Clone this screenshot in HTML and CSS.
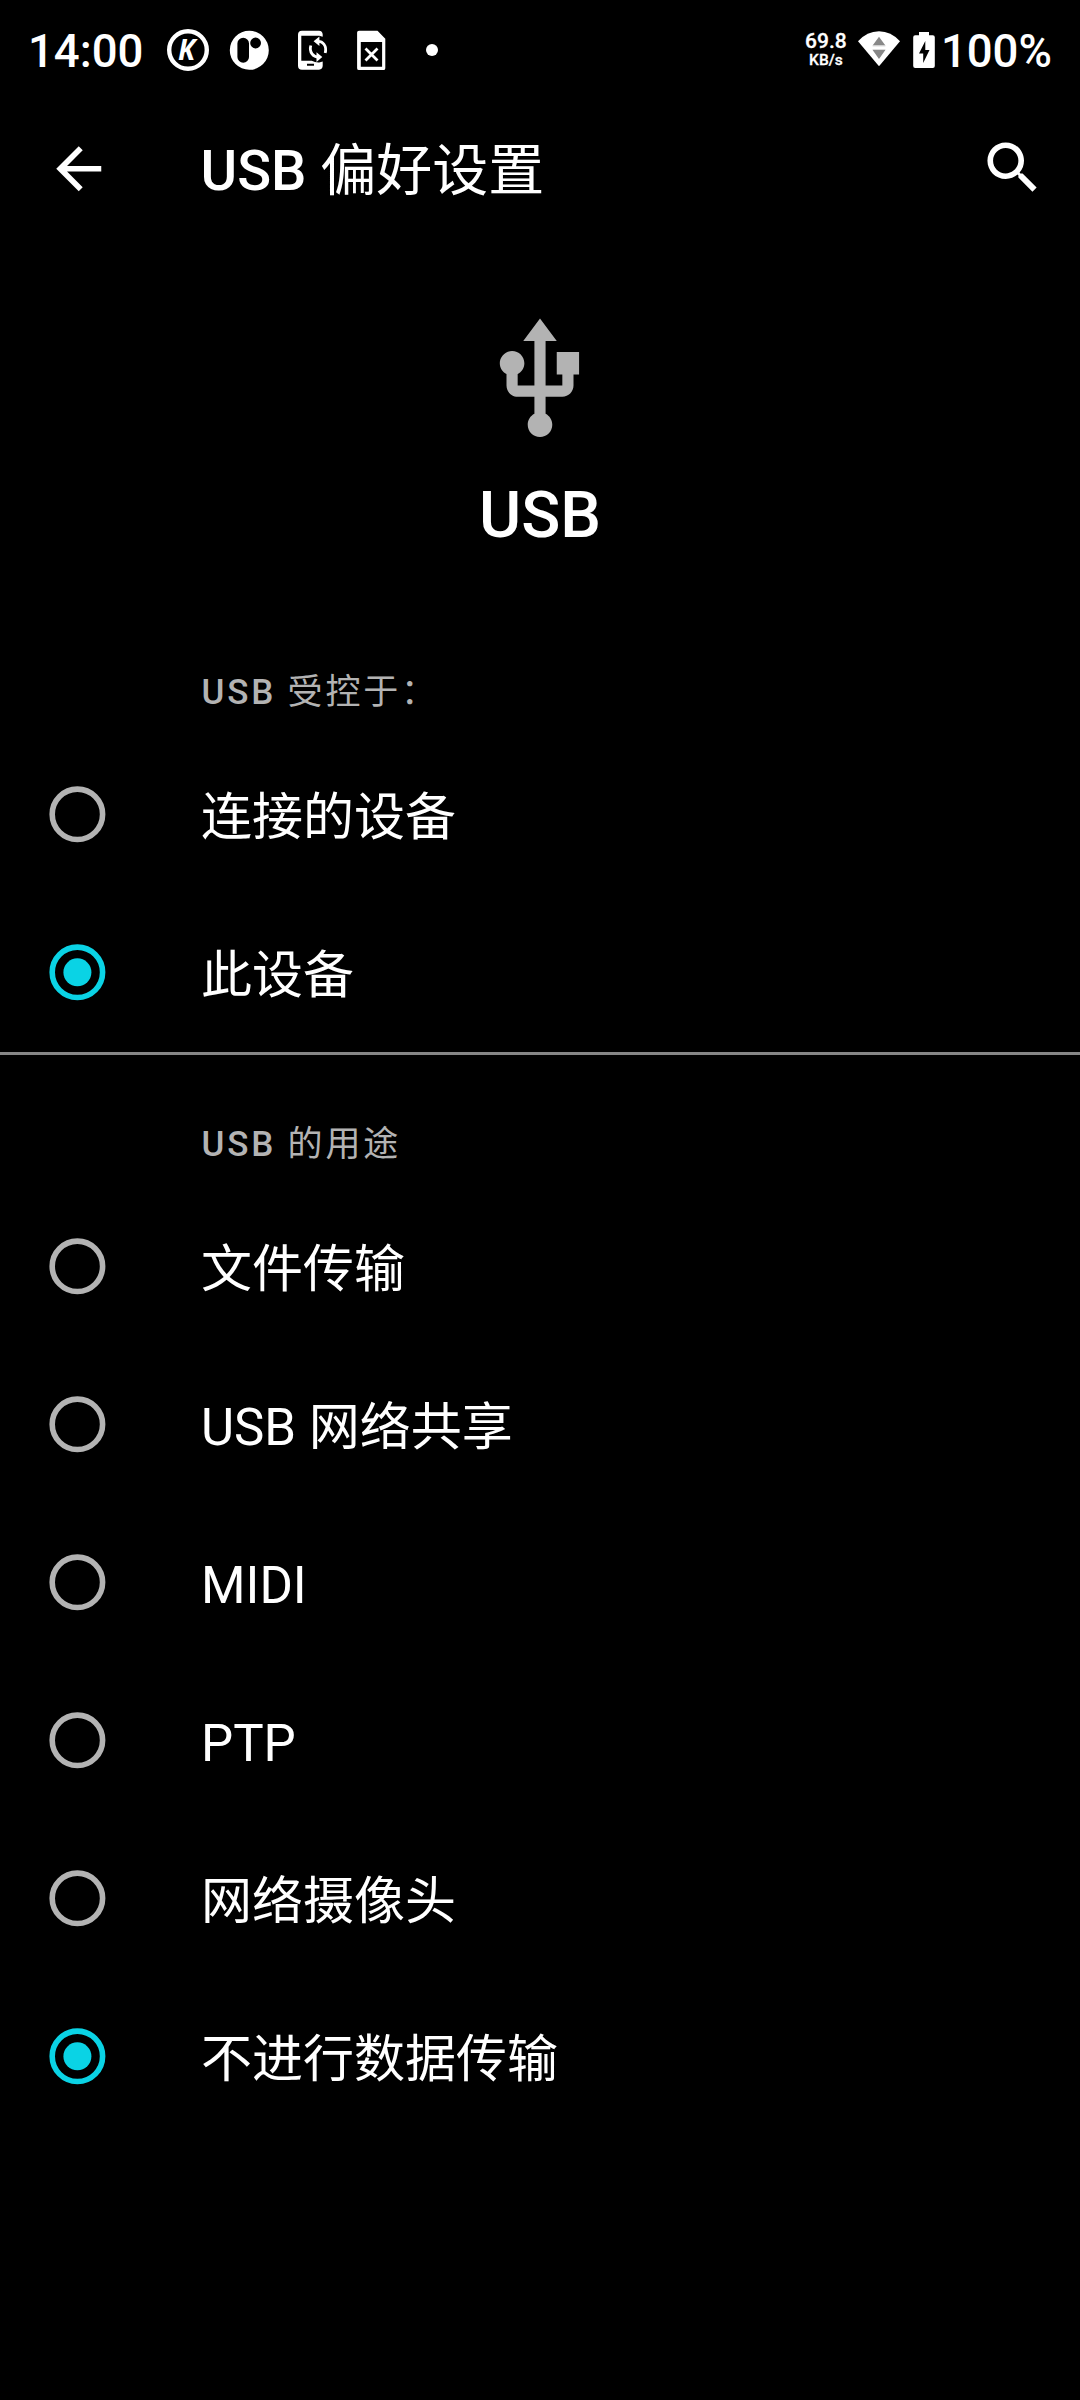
FILE: index.html
```html
<!DOCTYPE html>
<html lang="zh-CN">
<head>
<meta charset="utf-8">
<title>USB 偏好设置</title>
<link rel="stylesheet" href="styles.css">
</head>
<body>
<svg class="defs" width="0" height="0">
  <symbol id="radio-off" viewBox="0 0 57 57"><circle cx="28.400" cy="28.300" r="25.200" fill="none" stroke="#b3b3b3" stroke-width="5.600"/></symbol>
  <symbol id="radio-on" viewBox="0 0 57 57"><circle cx="28.400" cy="28.300" r="25.200" fill="none" stroke="#0ad3e5" stroke-width="5.600"/><circle cx="28.400" cy="28.300" r="14" fill="#0ad3e5"/></symbol>
</svg>
<div class="status-bar">
  <span class="clock">14:00</span>
  <svg class="notifications" viewBox="160 28 284 44" width="284" height="44">
    <circle cx="188" cy="50" r="18.8" fill="none" stroke="#fff" stroke-width="4.4"/>
    <text class="k-mark" x="178" y="60">K</text>
    <path fill="#fff" fill-rule="evenodd" d="M229.8 50.3a19.5 19.5 0 1 0 39 0a19.5 19.5 0 1 0-39 0zM237.4 43.5a5.8 5.8 0 0 1 11.6 0v13.4a5.8 5.8 0 0 1-11.6 0zM250.2 43a5.4 5.4 0 1 0 10.8 0a5.4 5.4 0 1 0-10.8 0z"/>
    <path fill="#fff" fill-rule="evenodd" d="M302 30.7h17a4 4 0 0 1 3.7 3.8v2.3l-3.400-1h-18v24.900h10.400q3.500 2 7.500 1.800l3.500-1v4.300a4 4 0 0 1-3.700 3.900h-17a4 4 0 0 1-4-4v-31a4 4 0 0 1 4-4zM307 63.700v2h7v-2z"/>
    <g fill="none" stroke="#fff" stroke-width="2.800"><path d="M316.500 41.500C323 40.500 327 46 325.200 53"/><path d="M319.500 57C313 57.500 309 52 310.800 45.500"/></g>
    <path fill="#fff" d="M313.600 41.300l5.800-4.800v9.600zM322.300 57l-5.800 4.900v-9.700z"/>
    <path fill="#fff" fill-rule="evenodd" d="M359 30.700h18.500l7.800 8v29.500a1.900 1.900 0 0 1-1.900 1.900H359a1.900 1.900 0 0 1-1.900-1.900V32.600a1.900 1.900 0 0 1 1.900-1.900zM360.800 42v24.700h21.300V42z"/>
    <path d="M365.500 48.500l12 12m0-12l-12 12" stroke="#fff" stroke-width="2.800"/>
    <circle cx="432" cy="50" r="6" fill="#fff"/>
  </svg>
  <div class="net-speed"><span class="speed-value">69.8</span><span class="speed-unit">KB/s</span></div>
  <svg class="signal" viewBox="856 28 82 44" width="82" height="44">
    <path fill="#fff" d="M858 41.200Q867 31.200 879 31.200T900 41.200L879 66.200z"/>
    <path fill="#888" d="M879 36.700l6.400 8.900h-12.800zM872.600 50h12.800l-6.400 9z"/>
    <path fill="#ddd" d="M872.600 45.600h12.800v1h-12.800zM872.600 49h12.800v1h-12.800z"/>
    <path fill="#fff" fill-rule="evenodd" d="M919 32h10v3.300h3.800a2 2 0 0 1 2 2V66a2 2 0 0 1-2 2h-17.600a2 2 0 0 1-2-2V37.300a2 2 0 0 1 2-2h3.800zM925.300 41l-6.300 12.500h4.200v9.500l6.300-13h-4.200z"/>
  </svg>
  <span class="battery">100%</span>
</div>

<header class="app-bar">
  <svg class="back" viewBox="0 0 24 24"><path fill="#fff" d="M20 11H7.830l5.590-5.590L12 4l-8 8 8 8 1.410-1.410L7.830 13H20v-2z"/></svg>
  <h1 class="title">USB <span class="cjk">偏好设置</span></h1>
  <svg class="search" viewBox="0 0 24 24"><path fill="#fff" d="M15.500 14h-.79l-.28-.27C15.410 12.590 16 11.110 16 9.500 16 5.910 13.090 3 9.500 3S3 5.910 3 9.500 5.910 16 9.500 16c1.610 0 3.090-.59 4.230-1.570l.27.28v.79l5 4.990L20.490 19l-4.990-5zm-6 0C7.010 14 5 11.990 5 9.500S7.010 5 9.500 5 14 7.010 14 9.500 11.990 14 9.500 14z"/></svg>
</header>

<main>
  <section class="hero">
    <svg class="usb-icon" viewBox="0 0 24 24"><path fill="#b3b3b3" d="M15 7v4h1v2h-3V5h2l-3-4-3 4h2v8H8v-2.070c.7-.37 1.200-1.080 1.200-1.930 0-1.210-.99-2.200-2.200-2.200-1.210 0-2.200.99-2.200 2.200 0 .85.5 1.560 1.200 1.930V13c0 1.110.89 2 2 2h3v3.050c-.71.37-1.200 1.100-1.200 1.950 0 1.220.99 2.200 2.200 2.200 1.210 0 2.200-.98 2.200-2.200 0-.85-.49-1.580-1.200-1.950V15h3c1.110 0 2-.89 2-2v-2h1V7h-4z"/></svg>
    <h2 class="hero-title">USB</h2>
  </section>
  <section class="group">
    <h3 class="category">USB <span class="cjk">受控于：</span></h3>
    <div class="option"><svg class="radio"><use href="#radio-off"/></svg><span class="label">连接的设备</span></div>
    <div class="option"><svg class="radio"><use href="#radio-on"/></svg><span class="label">此设备</span></div>
  </section>
  <section class="group divided">
    <h3 class="category">USB <span class="cjk">的用途</span></h3>
    <div class="option"><svg class="radio"><use href="#radio-off"/></svg><span class="label">文件传输</span></div>
    <div class="option"><svg class="radio"><use href="#radio-off"/></svg><span class="label">USB 网络共享</span></div>
    <div class="option"><svg class="radio"><use href="#radio-off"/></svg><span class="label">MIDI</span></div>
    <div class="option"><svg class="radio"><use href="#radio-off"/></svg><span class="label">PTP</span></div>
    <div class="option"><svg class="radio"><use href="#radio-off"/></svg><span class="label">网络摄像头</span></div>
    <div class="option"><svg class="radio"><use href="#radio-on"/></svg><span class="label">不进行数据传输</span></div>
  </section>
</main>
</body>
</html>
```
FILE: styles.css
```css
* { box-sizing: border-box; }

body {
  margin: 0;
  min-height: 2400px;
  background: #000;
  color: #fff;
  font-family: Roboto, "Noto Sans CJK SC", sans-serif;
  white-space: nowrap;
}

h1, h2, h3 { margin: 0; }
svg { display: block; flex: none; }

/* Chinese text keeps the regular weight beside medium Latin */
.cjk { font-weight: 400; }

.status-bar {
  display: flex;
  align-items: center;
  height: 100px;
  padding: 0 28px;
}

.clock, .battery {
  font-size: 45.5px;
  font-weight: 500;
  line-height: 60px;
  padding-top: 3px;
}

.clock { width: 132px; }

.k-mark {
  font: italic 700 28px "Open Sans", sans-serif;
  fill: #fff;
}

.net-speed {
  display: flex;
  flex-direction: column;
  align-items: center;
  width: 44px;
  margin-left: 360px;
  font-weight: 500;
  -webkit-text-stroke: 0.3px #fff;
}

.speed-value { font-size: 21px; line-height: 20px; }
.speed-unit { font-size: 15.5px; line-height: 18px; }

.signal { margin-left: 8px; }
.battery { margin-left: 3px; }

.app-bar {
  display: flex;
  align-items: center;
  height: 136px;
  padding: 0 34px 0 45px;
}

.back, .search { width: 67.5px; height: 67.5px; }
.back { margin-top: 1px; }
.search { margin-left: auto; margin-bottom: 1px; }

.title {
  margin-left: 88px;
  padding-top: 6px;
  font-size: 56px;
  font-weight: 500;
  line-height: 70px;
}

.hero {
  display: flex;
  flex-direction: column;
  align-items: center;
  height: 367px;
  padding-top: 77px;
}

.usb-icon { width: 134px; height: 134px; }

.hero-title {
  margin-top: 28px;
  font-size: 64.5px;
  font-weight: 500;
  line-height: 80px;
}

.divided { border-top: 3px solid #868686; }

.category {
  height: 133px;
  padding: 46px 0 0 201.5px;
  color: #b3b3b3;
  font-size: 35px;
  font-weight: 500;
  line-height: 87px;
  letter-spacing: 0.08em;
}

.option {
  display: flex;
  align-items: center;
  height: 158px;
  padding-left: 49px;
}

.radio {
  width: 57px;
  height: 57px;
  margin-bottom: 1px;
}

.label {
  margin-left: 95px;
  padding-top: 6px;
  font-size: 51px;
  line-height: 64px;
}
```
